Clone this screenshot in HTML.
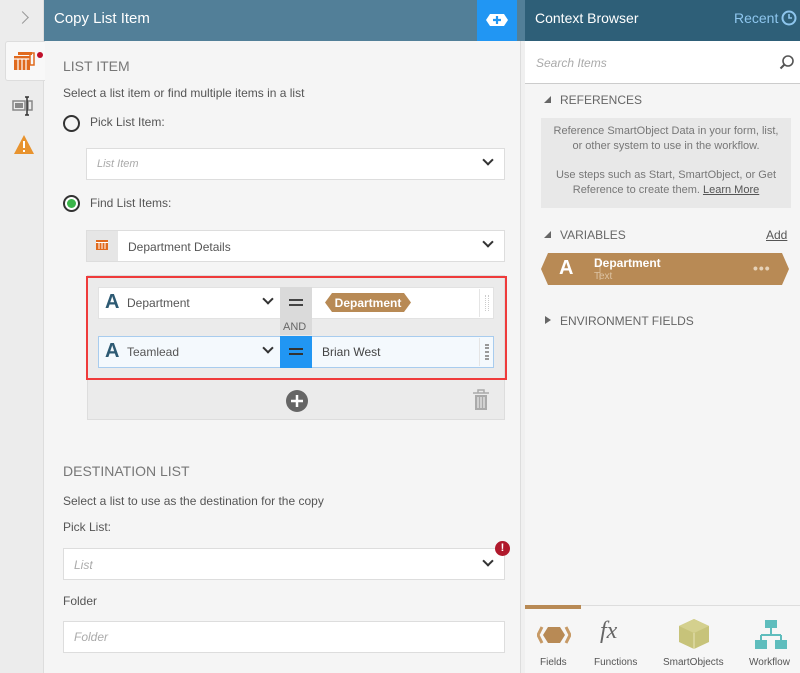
<!DOCTYPE html>
<html><head><meta charset="utf-8"><style>
*{box-sizing:border-box;margin:0;padding:0}
body{width:800px;height:673px;overflow:hidden;position:relative;font-family:"Liberation Sans",sans-serif;font-size:12px;color:#555;background:#f5f5f5}
.a{position:absolute}
.box{position:absolute;background:#fff;border:1px solid #ddd}
.chev{position:absolute;width:8px;height:8px;border-right:2px solid #333;border-bottom:2px solid #333;transform:rotate(45deg)}
.it{font-style:italic;color:#aaa}
</style></head><body>
<div class="a" style="left:0;top:0;width:44px;height:673px;background:#ececec;border-right:1px solid #ddd"></div>
<div class="a" style="left:18px;top:13px;width:9px;height:9px;border-right:1.5px solid #999;border-top:1.5px solid #999;transform:rotate(45deg)"></div>
<div class="a" style="left:5px;top:41px;width:40px;height:40px;background:#f8f8f8;border:1px solid #ddd;border-right:none;border-radius:3px 0 0 3px"></div>
<svg class="a" style="left:13px;top:50px" width="32" height="28"><rect x="1" y="6" width="16" height="14" fill="#e06a1e"/><g stroke="#fff" stroke-width="1.2"><line x1="5" y1="9" x2="5" y2="20"/><line x1="9" y1="9" x2="9" y2="20"/><line x1="13" y1="9" x2="13" y2="20"/><line x1="1" y1="9" x2="17" y2="9"/></g><rect x="17" y="3" width="4" height="12" fill="none" stroke="#e06a1e" stroke-width="1.5"/><rect x="5" y="2" width="14" height="3" fill="#e06a1e"/><circle cx="27" cy="5" r="3" fill="#c0102a"/></svg>
<svg class="a" style="left:12px;top:95px" width="24" height="24"><rect x="1" y="6" width="12" height="9" fill="none" stroke="#888" stroke-width="1.5"/><rect x="3" y="8" width="8" height="5" fill="#888"/><rect x="16" y="6" width="4" height="9" fill="none" stroke="#888" stroke-width="1.5"/><path d="M13 2h4M15 2v18M13 20h4" stroke="#333" stroke-width="1.5" fill="none"/></svg>
<svg class="a" style="left:13px;top:134px" width="22" height="22"><path d="M11 1L21 20H1Z" fill="#e8932e"/><rect x="10" y="7" width="2" height="7" fill="#fff"/><rect x="10" y="16" width="2" height="2" fill="#fff"/></svg>
<div class="a" style="left:44px;top:0;width:481px;height:41px;background:#527f98"></div>
<div class="a" style="left:54px;top:10px;color:#fff;font-size:15px">Copy List Item</div>
<div class="a" style="left:477px;top:0;width:40px;height:41px;background:#2196f3"></div>
<svg class="a" style="left:485px;top:13px" width="24" height="14"><path d="M5 1H19L23 7L19 13H5L1 7Z" fill="#fff"/><path d="M12 3v8M8 7h8" stroke="#2196f3" stroke-width="2.2"/></svg>
<div class="a" style="left:517px;top:0;width:8px;height:41px;background:#527f98"></div>
<div class="a" style="left:520px;top:41px;width:5px;height:632px;background:#f0f0f0;border-left:1px solid #ddd"></div>
<div class="a" style="left:63px;top:58px;font-size:14px;color:#777">LIST ITEM</div>
<div class="a" style="left:63px;top:86px">Select a list item or find multiple items in a list</div>
<div class="a" style="left:63px;top:115px;width:17px;height:17px;border:2px solid #333;border-radius:50%"></div>
<div class="a" style="left:90px;top:115px">Pick List Item:</div>
<div class="box" style="left:86px;top:148px;width:419px;height:32px"></div>
<div class="a it" style="left:97px;top:158px;font-size:11px">List Item</div>
<div class="chev" style="left:484px;top:156px"></div>
<div class="a" style="left:63px;top:195px;width:17px;height:17px;border:2px solid #333;border-radius:50%;background:#fff"><div style="margin:2px;width:9px;height:9px;border-radius:50%;background:#3bb54a"></div></div>
<div class="a" style="left:90px;top:196px">Find List Items:</div>
<div class="box" style="left:86px;top:230px;width:419px;height:32px"></div>
<div class="a" style="left:87px;top:231px;width:31px;height:30px;background:#e6e6e6"></div>
<svg class="a" style="left:96px;top:240px" width="12" height="10"><rect width="12" height="10" fill="#e06a1e"/><path d="M3 3v6M6 3v6M9 3v6M0 2.5h12" stroke="#fff"/></svg>
<div class="a" style="left:128px;top:240px">Department Details</div>
<div class="chev" style="left:484px;top:238px"></div>
<div class="a" style="left:87px;top:275px;width:418px;height:145px;background:#ebebeb;border:1px solid #ddd"></div>
<div class="box" style="left:98px;top:287px;width:396px;height:32px;border-color:#e2e2e2"></div>
<div class="a" style="left:105px;top:291px;font-size:20px;font-weight:bold;color:#2d5a73">A</div>
<div class="a" style="left:127px;top:296px">Department</div>
<div class="chev" style="left:264px;top:295px"></div>
<div class="a" style="left:280px;top:287px;width:32px;height:48px;background:#dadada"></div>
<div class="a" style="left:289px;top:299px;width:14px;height:7px;border-top:2px solid #444;border-bottom:2px solid #444"></div>
<div class="a" style="left:283px;top:321px;font-size:11px;color:#666">AND</div>
<svg class="a" style="left:324px;top:293px" width="88" height="19"><path d="M8 0H80L87 9.5L80 19H8L1 9.5Z" fill="#b88a55"/><text x="44" y="14" text-anchor="middle" fill="#fff" font-family="Liberation Sans" font-size="12" font-weight="bold">Department</text></svg>
<div class="a" style="left:479px;top:289px;width:1px;height:28px;background:#e5e5e5"></div>
<div class="a" style="left:485px;top:295px;width:4px;height:16px;border-left:1px dotted #ccc;border-right:1px dotted #ccc"></div>
<div class="box" style="left:98px;top:336px;width:396px;height:32px;background:#f4f9fd;border-color:#a8ccee"></div>
<div class="a" style="left:105px;top:340px;font-size:20px;font-weight:bold;color:#2d5a73">A</div>
<div class="a" style="left:127px;top:345px">Teamlead</div>
<div class="chev" style="left:264px;top:344px"></div>
<div class="a" style="left:280px;top:336px;width:32px;height:32px;background:#2196f3"></div>
<div class="a" style="left:289px;top:348px;width:14px;height:7px;border-top:2px solid #333;border-bottom:2px solid #333"></div>
<div class="a" style="left:322px;top:345px;color:#444">Brian West</div>
<div class="a" style="left:479px;top:338px;width:1px;height:28px;background:#e5e5e5"></div>
<div class="a" style="left:485px;top:344px;width:4px;height:16px;border-left:2px dotted #999;border-right:2px dotted #999"></div>
<div class="a" style="left:86px;top:276px;width:421px;height:104px;border:2px solid #ef3b3b"></div>
<svg class="a" style="left:285px;top:389px" width="24" height="24"><circle cx="12" cy="12" r="11" fill="#666"/><path d="M12 6v12M6 12h12" stroke="#fff" stroke-width="2.5"/></svg>
<svg class="a" style="left:472px;top:388px" width="18" height="24"><path d="M1 5h16M6 5V2h6v3" stroke="#aaa" stroke-width="1.5" fill="none"/><path d="M3 7h12v15H3Z" fill="#aaa"/><path d="M6 9v11M9 9v11M12 9v11" stroke="#ebebeb" stroke-width="1.2"/></svg>
<div class="a" style="left:63px;top:463px;font-size:14px;color:#777">DESTINATION LIST</div>
<div class="a" style="left:63px;top:494px">Select a list to use as the destination for the copy</div>
<div class="a" style="left:63px;top:520px">Pick List:</div>
<div class="box" style="left:63px;top:548px;width:442px;height:32px"></div>
<div class="a it" style="left:74px;top:558px">List</div>
<div class="chev" style="left:484px;top:557px"></div>
<div class="a" style="left:495px;top:541px;width:15px;height:15px;border-radius:50%;background:#b0192c;color:#fff;font-weight:bold;font-size:11px;text-align:center;line-height:15px">!</div>
<div class="a" style="left:63px;top:594px">Folder</div>
<div class="box" style="left:63px;top:621px;width:442px;height:32px"></div>
<div class="a it" style="left:74px;top:630px">Folder</div>
<div class="a" style="left:525px;top:0;width:275px;height:41px;background:#2e5f78"></div>
<div class="a" style="left:535px;top:10px;color:#fff;font-size:14px">Context Browser</div>
<div class="a" style="left:734px;top:10px;color:#8ec6ee;font-size:14px">Recent</div>
<svg class="a" style="left:781px;top:10px" width="16" height="16"><circle cx="8" cy="8" r="6.5" fill="none" stroke="#8ec6ee" stroke-width="2"/><path d="M8 4v4h3" stroke="#8ec6ee" stroke-width="1.6" fill="none"/></svg>
<div class="a" style="left:525px;top:41px;width:275px;height:43px;background:#fff;border-bottom:1px solid #ccc"></div>
<div class="a it" style="left:536px;top:56px">Search Items</div>
<svg class="a" style="left:779px;top:54px" width="16" height="16"><circle cx="9" cy="7" r="5" fill="none" stroke="#555" stroke-width="1.6"/><path d="M5.5 10.5L1.5 14.5" stroke="#555" stroke-width="2"/></svg>
<svg class="a" style="left:544px;top:96px" width="7" height="7"><path d="M7 0V7H0Z" fill="#666"/></svg>
<div class="a" style="left:560px;top:93px;color:#666">REFERENCES</div>
<div class="a" style="left:541px;top:118px;width:250px;height:90px;background:#e8e8e8;color:#777;font-size:11px;text-align:center;line-height:15px;padding-top:6px">Reference SmartObject Data in your form, list,<br>or other system to use in the workflow.<br><div style="height:14px"></div>Use steps such as Start, SmartObject, or Get<br>Reference to create them. <u style="color:#555">Learn More</u></div>
<svg class="a" style="left:544px;top:231px" width="7" height="7"><path d="M7 0V7H0Z" fill="#666"/></svg>
<div class="a" style="left:560px;top:228px;color:#666">VARIABLES</div>
<div class="a" style="left:766px;top:228px;color:#555;text-decoration:underline">Add</div>
<svg class="a" style="left:540px;top:252px" width="250" height="34"><path d="M8 1H242L249 17L242 33H8L1 17Z" fill="#b88a55"/><line x1="60" y1="6" x2="60" y2="28" stroke="#d6b58d"/></svg>
<div class="a" style="left:559px;top:257px;color:#fff;font-weight:bold;font-size:20px">A</div>
<div class="a" style="left:594px;top:256px;color:#fff;font-weight:bold">Department</div>
<div class="a" style="left:594px;top:271px;color:#dcc3a3;font-size:10px">Text</div>
<div class="a" style="left:753px;top:260px;color:#e6d2b8;font-size:14px;letter-spacing:1px;font-weight:bold">•••</div>
<svg class="a" style="left:545px;top:316px" width="6" height="8"><path d="M0 0L6 4L0 8Z" fill="#666"/></svg>
<div class="a" style="left:560px;top:314px;color:#666">ENVIRONMENT FIELDS</div>
<div class="a" style="left:525px;top:605px;width:275px;height:68px;background:#f6f6f6;border-top:1px solid #ddd"></div>
<div class="a" style="left:525px;top:605px;width:56px;height:4px;background:#b88a55"></div>
<svg class="a" style="left:537px;top:624px" width="34" height="22"><path d="M5 3L1 11L5 19" stroke="#c79a66" stroke-width="3" fill="none"/><path d="M29 3L33 11L29 19" stroke="#c79a66" stroke-width="3" fill="none"/><path d="M11 3H23L28 11L23 19H11L6 11Z" fill="#b88a55"/></svg>
<div class="a" style="left:600px;top:618px;font-family:'Liberation Serif',serif;font-style:italic;font-size:24px;color:#666">fx</div>
<svg class="a" style="left:677px;top:618px" width="34" height="32"><path d="M17 1L32 8V24L17 31L2 24V8Z" fill="#c7c37a"/><path d="M2 8L17 1L32 8L17 15Z" fill="#d4d08e"/><path d="M17 15V31" stroke="#e8e6b8" stroke-width="1"/></svg>
<svg class="a" style="left:755px;top:619px" width="32" height="32"><rect x="10" y="1" width="12" height="8" fill="#5fbdbd"/><path d="M16 9v7M6 16h20M6 16v5M26 16v5" stroke="#5fbdbd" stroke-width="2" fill="none"/><rect x="0" y="21" width="12" height="9" fill="#5fbdbd"/><rect x="20" y="21" width="12" height="9" fill="#5fbdbd"/></svg>
<div class="a" style="left:540px;top:657px;font-size:10px;color:#555">Fields</div>
<div class="a" style="left:594px;top:657px;font-size:10px;color:#555">Functions</div>
<div class="a" style="left:663px;top:657px;font-size:10px;color:#555">SmartObjects</div>
<div class="a" style="left:749px;top:657px;font-size:10px;color:#555">Workflow</div>
</body></html>
